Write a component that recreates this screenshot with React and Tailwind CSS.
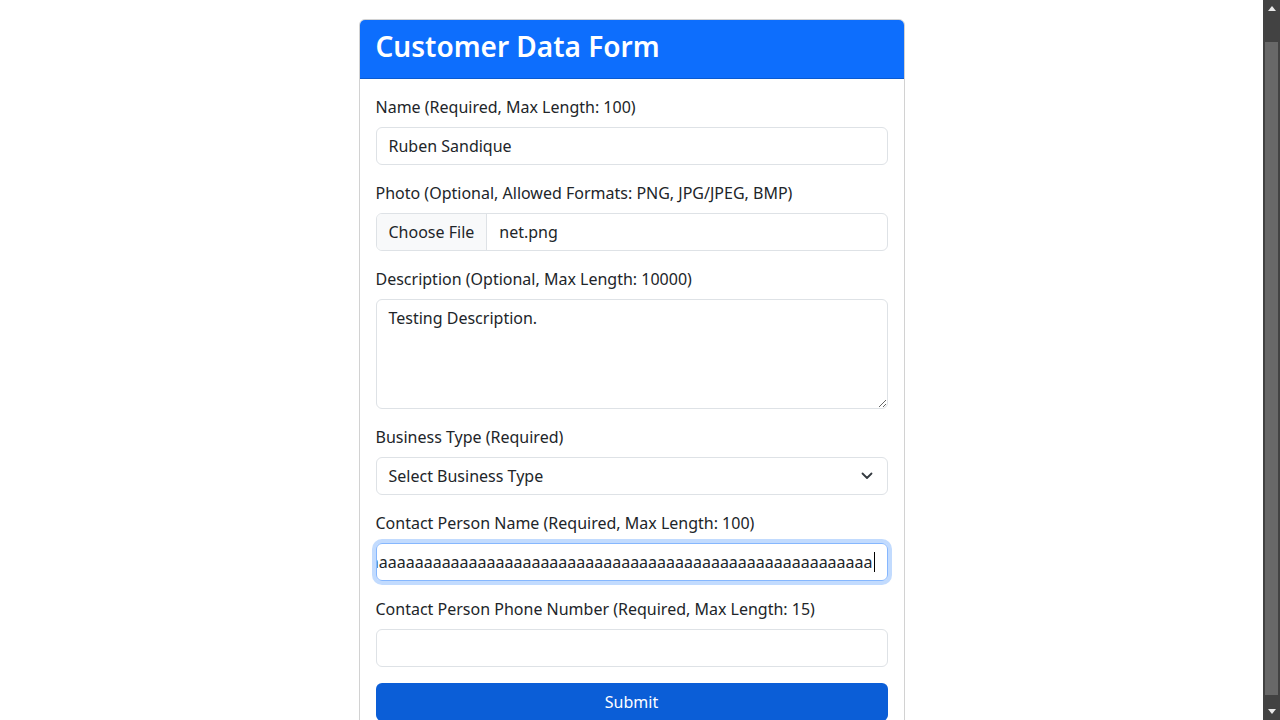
import React from 'react';

const fieldClass =
  'block w-full h-[38px] px-3 py-[6px] text-base leading-6 text-[#212529] bg-white border border-[#dee2e6] rounded-[6px] outline-none';

const Label = ({ children }) => (
  <label className="block mb-2 text-base leading-6 text-[#212529]">{children}</label>
);

const Scrollbar = () => (
  <div className="w-[17px] h-full bg-[#424242] flex flex-col items-center shrink-0">
    <div className="h-[17px] w-full flex items-center justify-center">
      <svg width="8" height="5" viewBox="0 0 8 5">
        <path d="M0 5 L4 0 L8 5 Z" fill="#e8e8e8" />
      </svg>
    </div>
    <div className="flex-1 w-full px-[2px] pt-[25px] pb-[8px]">
      <div className="w-full h-full bg-[#686868]" />
    </div>
    <div className="h-[17px] w-full flex items-center justify-center">
      <svg width="8" height="5" viewBox="0 0 8 5">
        <path d="M0 0 L4 5 L8 0 Z" fill="#e8e8e8" />
      </svg>
    </div>
  </div>
);

export default function App() {
  const longText = 'a'.repeat(160);

  return (
    <div
      className="h-[720px] w-[1280px] flex overflow-hidden bg-white text-[#212529]"
      style={{ fontFamily: '"Noto Sans", "Open Sans", sans-serif' }}
    >
      <main className="flex-1 flex justify-center pt-[19px] overflow-hidden">
        <div className="w-[546px] border border-[rgba(0,0,0,0.175)] rounded-[6px] self-start">
          {/* Card Header */}
          <div className="bg-[#0d6efd] rounded-t-[5px] px-4 pt-[9px] pb-[15px] border-b border-[rgba(0,0,0,0.175)]">
            <h3 className="text-[28px] leading-[34px] font-semibold text-white">Customer Data Form</h3>
          </div>

          {/* Card Body */}
          <div className="p-4">
            <div className="mb-4">
              <Label>Name (Required, Max Length: 100)</Label>
              <input className={fieldClass} defaultValue="Ruben Sandique" readOnly />
            </div>

            <div className="mb-4">
              <Label>Photo (Optional, Allowed Formats: PNG, JPG/JPEG, BMP)</Label>
              <div className="flex h-[38px] border border-[#dee2e6] rounded-[6px] overflow-hidden">
                <div className="px-3 flex items-center bg-[#f8f9fa] border-r border-[#dee2e6] text-base">Choose File</div>
                <div className="px-3 flex items-center text-base">net.png</div>
              </div>
            </div>

            <div className="mb-4">
              <Label>Description (Optional, Max Length: 10000)</Label>
              <textarea
                rows={4}
                readOnly
                defaultValue="Testing Description."
                className="block w-full h-[110px] px-3 py-[6px] text-base leading-6 text-[#212529] bg-white border border-[#dee2e6] rounded-[6px] outline-none resize-y"
              />
            </div>

            <div className="mb-4">
              <Label>Business Type (Required)</Label>
              <div className="relative">
                <div className={`${fieldClass} flex items-center`}>Select Business Type</div>
                <svg
                  className="absolute right-[15px] top-[15px]"
                  width="12"
                  height="8"
                  viewBox="0 0 12 8"
                >
                  <path d="M1.5 1.5 6 6l4.5-4.5" fill="none" stroke="#343a40" strokeWidth="1.8" strokeLinecap="round" strokeLinejoin="round" />
                </svg>
              </div>
            </div>

            <div className="mb-4">
              <Label>Contact Person Name (Required, Max Length: 100)</Label>
              <div className="h-[38px] px-3 flex items-center justify-end overflow-hidden whitespace-nowrap border border-[#86b7fe] rounded-[6px] shadow-[0_0_0_4px_rgba(13,110,253,0.25)] text-base">
                <span>{longText}</span>
                <span className="inline-block w-px h-[20px] bg-black ml-[1px] shrink-0" />
              </div>
            </div>

            <div className="mb-4">
              <Label>Contact Person Phone Number (Required, Max Length: 15)</Label>
              <input className={fieldClass} readOnly />
            </div>

            <button className="w-full h-[38px] rounded-[6px] bg-[#0b5ed7] text-white text-base">Submit</button>
          </div>
        </div>
      </main>
      <Scrollbar />
    </div>
  );
}
